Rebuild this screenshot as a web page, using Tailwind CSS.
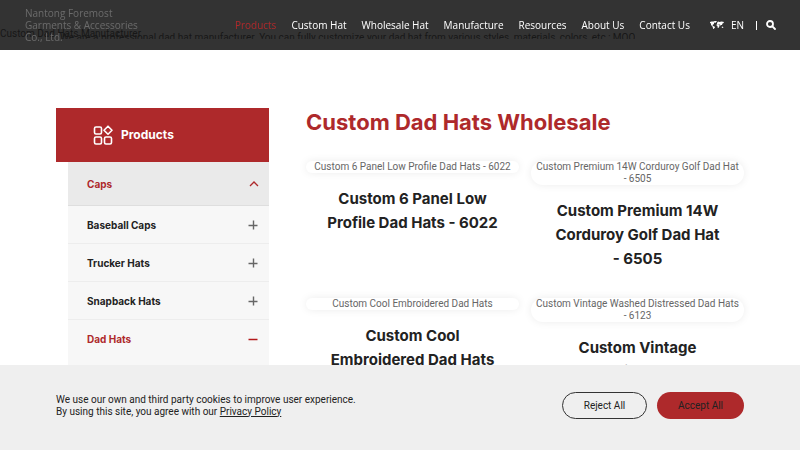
<!DOCTYPE html>
<html lang="en">
<head>
  <meta charset="UTF-8">
  <meta name="viewport" content="width=device-width, initial-scale=1.0">
  <title>Custom Dad Hats Wholesale</title>
  <script src="https://cdn.jsdelivr.net/npm/@tailwindcss/browser@4"></script>
</head>
<body class="bg-white text-[#222] font-['Roboto',sans-serif] text-[10px] leading-[12px] overflow-x-hidden">

  <!-- Header -->
  <header class="fixed top-0 inset-x-0 z-30 h-[50px] bg-black/80 text-white font-['Open_Sans',sans-serif] flex items-center px-6">
    <a href="#" class="w-[120px] shrink-0 ml-px text-[#6b6b6b]">Nantong Foremost Garments &amp; Accessories Co., Ltd.</a>
    <nav class="ml-auto flex items-center gap-[15px] whitespace-nowrap">
      <a href="#" class="text-[#ae292b]">Products</a>
      <a href="#">Custom Hat</a>
      <a href="#">Wholesale Hat</a>
      <a href="#">Manufacture</a>
      <a href="#">Resources</a>
      <a href="#">About Us</a>
      <a href="#">Contact Us</a>
    </nav>
    <a href="#" class="ml-5 flex items-center gap-[7px]">
      <svg class="w-[14px] h-[8px]" viewBox="0 0 28 16" fill="currentColor">
        <path d="M0 2l3-1 5 0 2 2-2 1 0 2-3 2 1 2 3 1 1 2-2 2-1 3-1-4-1-3-3-3 0-3-2-1z"/>
        <path d="M7 0l7 0-3 4z"/>
        <path d="M14 4l2-3 3 1 4-1 5 1-1 2-2 1-1 3-2 0-1 2-1-3-2 0-1-1-3 0z"/>
        <path d="M13 7l3-1 3 2 0 2-2 4-2-1 0-3-2-1z"/>
        <path d="M23 12l2-1 2 2-2 1z"/>
      </svg>
      <span>EN</span>
    </a>
    <span class="ml-3 w-px h-[9px] bg-white"></span>
    <button type="button" aria-label="Search" class="ml-[9px]">
      <svg class="w-[10px] h-[10px]" viewBox="0 0 20 20" fill="none" stroke="currentColor" stroke-width="3.6" stroke-linecap="round">
        <circle cx="8" cy="8" r="6"/>
        <path d="M12.8 12.8L18 18"/>
      </svg>
    </button>
  </header>

  <!-- Banner -->
  <section class="h-[50px] pt-7 text-[#777]">
    <div class="relative h-[11px] whitespace-nowrap">
      <h2>Custom Dad Hats Manufacturer</h2>
      <p class="absolute top-0 left-[60px] h-[11px] pt-1 overflow-hidden">We are a professional dad hat manufacturer. You can fully customize your dad hat from various styles, materials, colors, etc.; MOQ</p>
    </div>
  </section>

  <!-- Page content -->
  <div class="flex items-start gap-[37px] px-[7%] pt-[58px] pb-24">

    <!-- Sidebar -->
    <aside class="w-[213px] shrink-0 font-['Inter',sans-serif] font-bold">
      <div class="h-[54px] bg-[#ae292b] text-white flex items-center gap-2 pl-[37px] text-xs">
        <svg class="w-5 h-5" viewBox="0 0 20 20" fill="none" stroke="currentColor" stroke-width="1.6">
          <rect x="1.5" y="2" width="7" height="7" rx="1.5"/>
          <rect x="1.5" y="12" width="7" height="7" rx="1.5"/>
          <rect x="11.5" y="12" width="7" height="7" rx="1.5"/>
          <path d="M15 1.2l4 4-4 4-4-4z" stroke-linejoin="round"/>
        </svg>
        <span>Products</span>
      </div>
      <ul class="ml-3 bg-[#f7f7f7]">
        <li class="h-11 bg-[#eaeaea] border-b border-[#dedede] text-[#ae292b] flex items-center justify-between pl-[19px] pr-[10px]">
          <a href="#">Caps</a>
          <svg class="w-[10px] h-[10px]" viewBox="0 0 10 10" fill="none" stroke="currentColor" stroke-width="1.3"><path d="M1 7l4-4 4 4"/></svg>
        </li>
        <li class="h-[38px] border-b border-[#ededed] flex items-center justify-between pl-[19px] pr-[11px]">
          <a href="#">Baseball Caps</a>
          <svg class="w-[10px] h-[10px] text-[#666]" viewBox="0 0 10 10" stroke="currentColor" stroke-width="1.4"><path d="M0.5 5.5h9M5.5 0.5v9"/></svg>
        </li>
        <li class="h-[38px] border-b border-[#ededed] flex items-center justify-between pl-[19px] pr-[11px]">
          <a href="#">Trucker Hats</a>
          <svg class="w-[10px] h-[10px] text-[#666]" viewBox="0 0 10 10" stroke="currentColor" stroke-width="1.4"><path d="M0.5 5.5h9M5.5 0.5v9"/></svg>
        </li>
        <li class="h-[38px] border-b border-[#ededed] flex items-center justify-between pl-[19px] pr-[11px]">
          <a href="#">Snapback Hats</a>
          <svg class="w-[10px] h-[10px] text-[#666]" viewBox="0 0 10 10" stroke="currentColor" stroke-width="1.4"><path d="M0.5 5.5h9M5.5 0.5v9"/></svg>
        </li>
        <li class="h-[38px] text-[#ae292b] flex items-center justify-between pl-[19px] pr-[11px]">
          <a href="#">Dad Hats</a>
          <svg class="w-[10px] h-[10px]" viewBox="0 0 10 10" stroke="#b3191b" stroke-width="1.5"><path d="M0.5 5.5h9"/></svg>
        </li>
        <li class="h-[38px]"></li>
      </ul>
    </aside>

    <!-- Products -->
    <main class="flex-1 min-w-0">
      <h1 class="font-['Inter',sans-serif] text-[22px] leading-7 font-bold text-[#ae292b] whitespace-nowrap">Custom Dad Hats Wholesale</h1>
      <div class="mt-[25px] grid grid-cols-2 gap-x-3 gap-y-[27px] text-center">
        <a href="#">
          <div class="rounded-[12px] text-[#666] shadow-[0_0_8px_rgba(0,0,0,0.08)]">Custom 6 Panel Low Profile Dad Hats - 6022</div>
          <h3 class="mt-[14px] px-[18px] font-['Inter',sans-serif] text-[15px] leading-6 font-bold">Custom 6 Panel Low Profile Dad Hats - 6022</h3>
        </a>
        <a href="#">
          <div class="rounded-[12px] text-[#666] shadow-[0_0_8px_rgba(0,0,0,0.08)]">Custom Premium 14W Corduroy Golf Dad Hat <span class="whitespace-nowrap">- 6505</span></div>
          <h3 class="mt-[14px] px-[18px] font-['Inter',sans-serif] text-[15px] leading-6 font-bold">Custom Premium 14W Corduroy Golf Dad Hat <span class="whitespace-nowrap">- 6505</span></h3>
        </a>
        <a href="#">
          <div class="rounded-[12px] text-[#666] shadow-[0_0_8px_rgba(0,0,0,0.08)]">Custom Cool Embroidered Dad Hats</div>
          <h3 class="mt-[14px] px-[18px] font-['Inter',sans-serif] text-[15px] leading-6 font-bold">Custom Cool Embroidered Dad Hats</h3>
        </a>
        <a href="#">
          <div class="rounded-[12px] text-[#666] shadow-[0_0_8px_rgba(0,0,0,0.08)]">Custom Vintage Washed Distressed Dad Hats <span class="whitespace-nowrap">- 6123</span></div>
          <h3 class="mt-[14px] px-[18px] font-['Inter',sans-serif] text-[15px] leading-6 font-bold">Custom Vintage Washed Distressed Dad Hats - 6123</h3>
        </a>
      </div>
    </main>
  </div>

  <!-- Cookie notice -->
  <div class="fixed bottom-0 inset-x-0 z-40 h-[85px] bg-[#efefef] px-[7%] pb-1 flex items-center justify-between">
    <p>We use our own and third party cookies to improve user experience.<br>By using this site, you agree with our <a href="#" class="underline">Privacy Policy</a></p>
    <div class="flex gap-[10px]">
      <button type="button" class="w-[85px] h-[27px] rounded-full border border-[#333]">Reject All</button>
      <button type="button" class="w-[87px] h-[27px] rounded-full bg-[#ae292b]">Accept All</button>
    </div>
  </div>

</body>
</html>
